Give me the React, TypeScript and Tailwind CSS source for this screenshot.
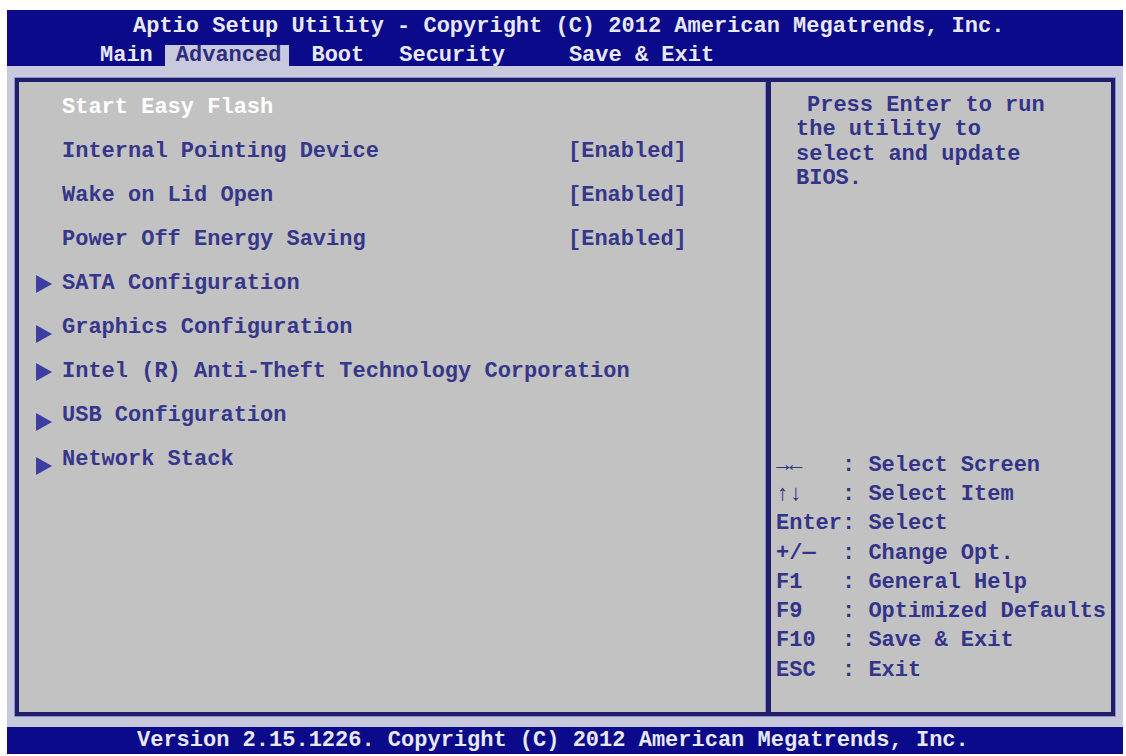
import React from 'react'

const MONO = { fontFamily: '"Liberation Mono", "Courier New", monospace' }

const ITEMS = [
  { label: 'Start Easy Flash', selected: true },
  { label: 'Internal Pointing Device', value: '[Enabled]' },
  { label: 'Wake on Lid Open', value: '[Enabled]' },
  { label: 'Power Off Energy Saving', value: '[Enabled]' },
  { label: 'SATA Configuration', sub: true },
  { label: 'Graphics Configuration', sub: true, low: true },
  { label: 'Intel (R) Anti-Theft Technology Corporation', sub: true },
  { label: 'USB Configuration', sub: true, low: true },
  { label: 'Network Stack', sub: true, low: true },
]

const KEYS = [
  { key: '→←', desc: 'Select Screen' },
  { key: '↑↓', desc: 'Select Item' },
  { key: 'Enter', desc: 'Select' },
  { key: '+/—', desc: 'Change Opt.' },
  { key: 'F1', desc: 'General Help' },
  { key: 'F9', desc: 'Optimized Defaults' },
  { key: 'F10', desc: 'Save & Exit' },
  { key: 'ESC', desc: 'Exit' },
]

function Arrow({ low }: { low?: boolean }) {
  return (
    <svg width="16" height="18" viewBox="0 0 16 18" className={low ? 'translate-y-[6px]' : ''}>
      <polygon points="0,0 16,9 0,18" fill="#3d3da2" />
    </svg>
  )
}

export default function App() {
  return (
    <div className="h-[756px] w-[1126px] bg-white pt-[10px] pl-[7px] pr-[3px] pb-[2px]" style={MONO}>
      <div className="flex h-full flex-col bg-[#c9c9dd] text-[22px] font-bold leading-none">
        {/* header */}
        <div className="flex h-[56px] flex-col bg-[#0a0a8a] text-[#e8e8f4]">
          <div className="flex h-[33px] items-center pl-[126px] pt-[1px] whitespace-pre">
            Aptio Setup Utility - Copyright (C) 2012 American Megatrends, Inc.
          </div>
          <div className="mt-auto flex h-[21px] items-center">
            <span className="ml-[93px]">Main</span>
            <span className="ml-[12px] flex h-full items-center bg-[#c9c9dd] pl-[11px] pr-[8px] text-[#2c2c7c]">
              Advanced
            </span>
            <span className="ml-[22px]">Boot</span>
            <span className="ml-[35px]">Security</span>
            <span className="ml-[64px]">Save &amp; Exit</span>
          </div>
        </div>

        {/* body frame */}
        <div className="flex flex-1 px-[8px] pt-[12px] pb-[11px]">
          <div className="flex flex-1 border-[4px] border-[#1e1e6c] bg-[#c2c2c2] shadow-[0_0_0_1px_#8f8fcc]">
            <div className="w-[747px] pt-[4px] text-[#36368a]">
              {ITEMS.map((it) => (
                <div key={it.label} className="flex h-[44px] items-center gap-[10px] pl-[17px]">
                  <div className="flex w-[16px] justify-center">{it.sub && <Arrow low={it.low} />}</div>
                  <span className={`w-[496px] whitespace-pre ${it.selected ? 'text-white' : ''}`}>
                    {it.label}
                  </span>
                  {it.value && <span>{it.value}</span>}
                </div>
              ))}
            </div>

            <div className="flex flex-1 flex-col border-l-[5px] border-[#1e1e6c] pl-[5px] pb-[27px] text-[#33338a] shadow-[-1px_0_0_#8f8fcc]">
              <div className="pt-[12px] leading-[24.3px]">
                <div className="pl-[31px]">Press Enter to run</div>
                <div className="pl-[20px]">the utility to</div>
                <div className="pl-[20px]">select and update</div>
                <div className="pl-[20px]">BIOS.</div>
              </div>
              <div className="mt-auto leading-[29.3px]">
                {KEYS.map((k) => (
                  <div key={k.key} className="flex whitespace-pre">
                    <span className="w-[66px]">{k.key}</span>
                    <span>: {k.desc}</span>
                  </div>
                ))}
              </div>
            </div>
          </div>
        </div>

        {/* footer */}
        <div className="flex h-[27px] items-center bg-[#0a0a8a] pl-[130px] whitespace-pre text-[#e8e8f4]">
          Version 2.15.1226. Copyright (C) 2012 American Megatrends, Inc.
        </div>
      </div>
    </div>
  )
}
